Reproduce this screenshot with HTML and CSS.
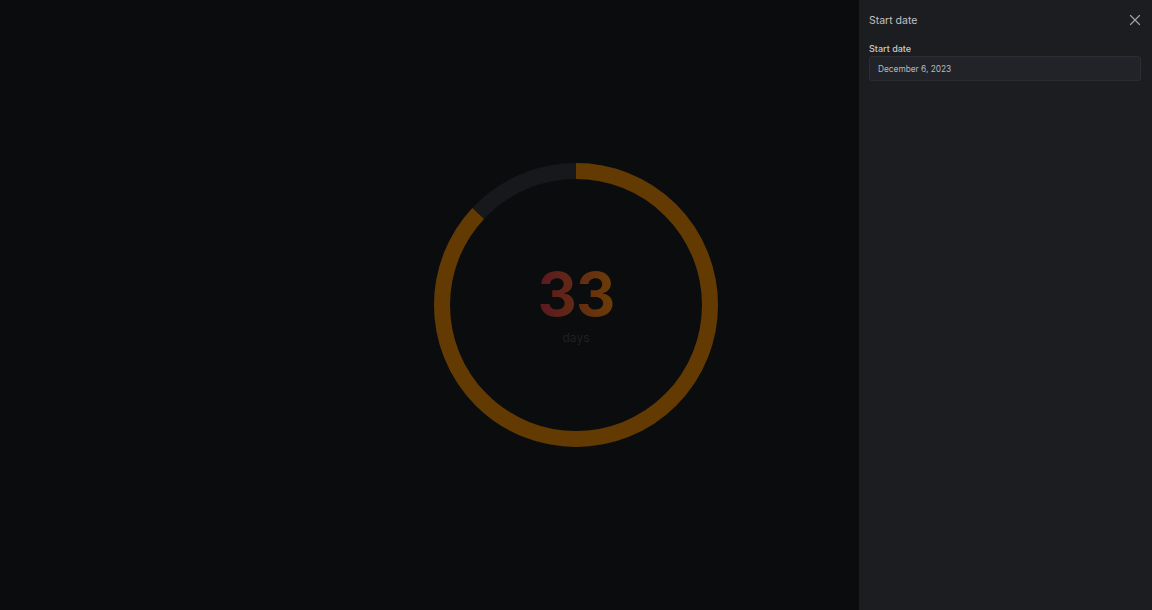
FILE: index.html
```html
<!DOCTYPE html>
<html>
<head>
<meta charset="utf-8">
<link rel="stylesheet" href="styles.css">
</head>
<body>
<main class="stage">
  <div class="gauge">
    <svg class="ring" width="284" height="284" viewBox="0 0 284 284">
      <circle class="track" cx="142" cy="142" r="134"/>
      <circle class="value" cx="142" cy="142" r="134" transform="rotate(-90 142 142)"/>
    </svg>
    <div class="readout">
      <div class="number">33</div>
      <div class="unit">days</div>
    </div>
  </div>
</main>
<aside class="drawer">
  <header class="drawer-head">
    <h2 class="drawer-title">Start date</h2>
    <button class="close" aria-label="Close">
      <svg width="12" height="12" viewBox="0 0 12 12"><path d="M1.5 1.5L10.5 10.5M10.5 1.5L1.5 10.5" stroke="#9fa1a7" stroke-width="1.2" stroke-linecap="round"/></svg>
    </button>
  </header>
  <div class="field">
    <label class="label">Start date</label>
    <div class="input">December 6, 2023</div>
  </div>
</aside>
</body>
</html>
```
FILE: styles.css
```css
html, body {
  margin: 0;
  padding: 0;
  width: 100%;
  height: 100%;
  background: #0b0c0e;
  font-family: Inter, Roboto, "Liberation Sans", sans-serif;
  overflow: hidden;
}
.stage {
  width: 100%;
  height: 100%;
  display: flex;
  align-items: center;
  justify-content: center;
}
.gauge {
  position: relative;
  width: 284px;
  height: 284px;
}
.ring { display: block; }
.track {
  fill: none;
  stroke: #17181b;
  stroke-width: 16;
}
.value {
  fill: none;
  stroke: #623a02;
  stroke-width: 16;
  stroke-dasharray: 732 842;
}
.readout {
  position: absolute;
  inset: 0;
  display: flex;
  flex-direction: column;
  align-items: center;
  padding-top: 101px;
  box-sizing: border-box;
}
.number {
  font-size: 61px;
  font-weight: 700;
  line-height: 61px;
  letter-spacing: -1px;
  background: linear-gradient(90deg, #5a1820 0%, #6c3d06 100%);
  -webkit-background-clip: text;
  background-clip: text;
  color: transparent;
}
.unit {
  font-size: 12px;
  line-height: 14px;
  color: #1f2024;
  margin-top: 6px;
}
.drawer {
  position: fixed;
  top: 0;
  right: 0;
  bottom: 0;
  width: 293px;
  background: #1c1d21;
  box-sizing: border-box;
  padding: 0 11px 0 10px;
}
.drawer-head {
  display: flex;
  align-items: center;
  justify-content: space-between;
  height: 40px;
}
.drawer-title {
  margin: 0;
  font-size: 10.5px;
  line-height: 13px;
  font-weight: 400;
  color: #c0c2c7;
}
.close {
  background: none;
  border: 0;
  padding: 0;
  width: 12px;
  height: 12px;
  display: flex;
  cursor: pointer;
}
.field {
  display: flex;
  flex-direction: column;
  padding-top: 3px;
}
.label {
  font-size: 9px;
  font-weight: 500;
  color: #c8cacf;
  line-height: 11px;
  margin-bottom: 2px;
}
.input {
  height: 25px;
  box-sizing: border-box;
  border: 1px solid #2b2d32;
  border-radius: 3px;
  background: #222328;
  font-size: 8.3px;
  color: #b8babf;
  display: flex;
  align-items: center;
  padding-left: 8px;
}
```
